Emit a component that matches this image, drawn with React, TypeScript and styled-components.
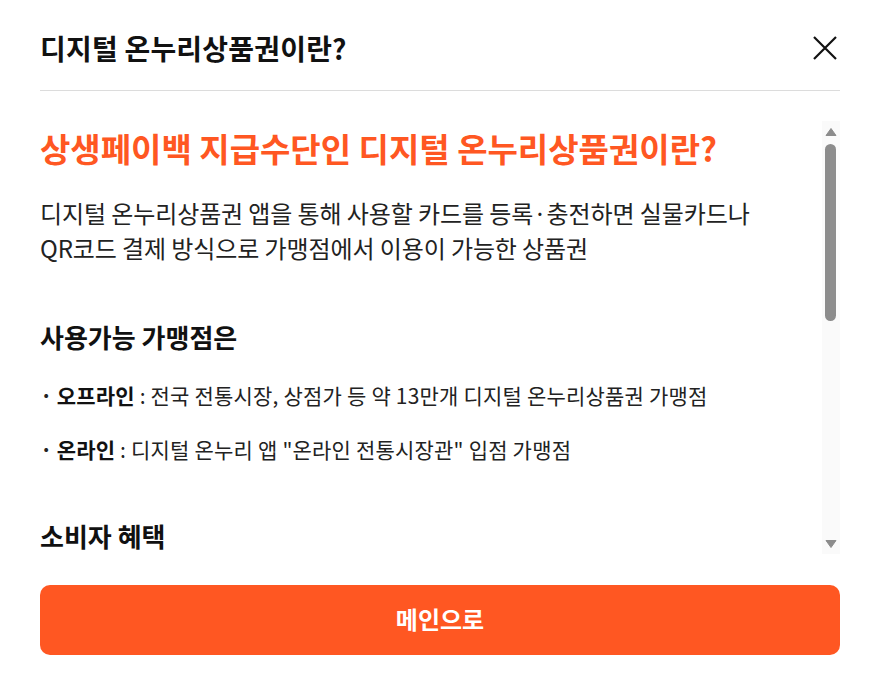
import React from 'react';
import styled, { createGlobalStyle } from 'styled-components';

const GlobalStyle = createGlobalStyle`
	html, body {
		margin: 0;
		padding: 0;
		background: #ffffff;
	}
	body {
		font-family: 'Noto Sans CJK KR', 'Noto Sans', sans-serif;
		color: #111111;
	}
`;

const Modal = styled.div`
	display: flex;
	flex-direction: column;
	width: 885px;
	height: 683px;
	box-sizing: border-box;
	padding: 30px 45px 28px 40px;
`;

const Header = styled.div`
	display: flex;
	align-items: flex-start;
	justify-content: space-between;
	padding-bottom: 24px;
	border-bottom: 1px solid #dcdcdc;
`;

const Title = styled.h1`
	margin: 0;
	font-size: 28px;
	line-height: 36px;
	font-weight: 700;
	letter-spacing: 0.2px;
`;

const CloseButton = styled.button`
	display: flex;
	align-items: center;
	justify-content: center;
	width: 36px;
	height: 36px;
	margin-right: -3px;
	padding: 0;
	border: none;
	background: transparent;
	cursor: pointer;
`;

const ScrollRow = styled.div`
	display: flex;
	margin-top: 30px;
	height: 433px;
`;

const ScrollBody = styled.div`
	flex: 1;
	overflow-y: auto;
	scrollbar-width: none;

	&::-webkit-scrollbar {
		display: none;
	}
`;

const ScrollTrack = styled.div`
	display: flex;
	flex-direction: column;
	align-items: flex-start;
	width: 18px;
	box-sizing: border-box;
	padding: 6px 0 5px 3px;
	background: #fafafa;
`;

const Arrow = styled.svg<{ $down?: boolean }>`
	display: block;
	transform: ${(p) => (p.$down ? 'rotate(180deg)' : 'none')};
	margin-top: ${(p) => (p.$down ? 'auto' : '0')};
`;

const Thumb = styled.div`
	width: 11px;
	height: 177px;
	margin-top: 7px;
	border-radius: 6px;
	background: #8c8c8c;
`;

const Content = styled.div`
	padding: 6px 20px 75px 0;
`;

const Lead = styled.h2`
	margin: 0 0 26px;
	font-size: 33px;
	line-height: 42px;
	font-weight: 700;
	color: #ff5722;
`;

const Paragraph = styled.p`
	margin: 0;
	font-size: 24px;
	line-height: 35px;
	letter-spacing: -0.1px;
	color: #222222;
`;

const SectionTitle = styled.h3`
	margin: 55px 0 26px;
	font-size: 26px;
	line-height: 34px;
	font-weight: 700;
`;

const Bullet = styled.p`
	margin: 0 0 24px;
	font-size: 21px;
	line-height: 30px;
	letter-spacing: 0.2px;
	color: #222222;

	strong {
		font-weight: 700;
		color: #111111;
	}
`;

const Dot = styled.span`
	margin-right: 4px;
	font-weight: 700;
`;

const Footer = styled.div`
	margin-top: 31px;
`;

const MainButton = styled.button`
	width: 800px;
	height: 70px;
	padding: 0 0 4px;
	border: none;
	border-radius: 10px;
	background: #ff5722;
	color: #ffffff;
	font-family: inherit;
	font-size: 24px;
	font-weight: 700;
	cursor: pointer;
`;

const ArrowIcon: React.FC<{ down?: boolean }> = ({ down }) => (
	<Arrow $down={down} width='12' height='10' viewBox='0 0 12 10'>
		<path d='M6 1.5L11 8.5H1Z' fill='#8c8c8c' stroke='#8c8c8c' strokeLinejoin='round' />
	</Arrow>
);

const App: React.FC = () => {
	return (
		<>
			<GlobalStyle />
			<Modal>
				<Header>
					<Title>디지털 온누리상품권이란?</Title>
					<CloseButton aria-label='닫기'>
						<svg width='26' height='26' viewBox='0 0 26 26'>
							<path d='M2 2L24 24M24 2L2 24' stroke='#111' strokeWidth='2.2' />
						</svg>
					</CloseButton>
				</Header>
				<ScrollRow>
					<ScrollBody>
						<Content>
							<Lead>상생페이백 지급수단인 디지털 온누리상품권이란?</Lead>
							<Paragraph>
								디지털 온누리상품권 앱을 통해 사용할 카드를 등록·충전하면 실물카드나
								<br />
								QR코드 결제 방식으로 가맹점에서 이용이 가능한 상품권
							</Paragraph>

							<SectionTitle>사용가능 가맹점은</SectionTitle>
							<Bullet>
								<Dot>·</Dot>
								<strong>오프라인</strong> : 전국 전통시장, 상점가 등 약 13만개 디지털 온누리상품권 가맹점
							</Bullet>
							<Bullet>
								<Dot>·</Dot>
								<strong>온라인</strong> : 디지털 온누리 앱 "온라인 전통시장관" 입점 가맹점
							</Bullet>

							<SectionTitle>소비자 혜택</SectionTitle>
							<Bullet>
								<Dot>·</Dot>
								<strong>할인 구매</strong> : 디지털 온누리상품권 충전 시 상시 할인 혜택 제공
							</Bullet>
							<Bullet>
								<Dot>·</Dot>
								<strong>소득공제</strong> : 전통시장 사용분 연말정산 소득공제율 40% 적용
							</Bullet>
							<Bullet>
								<Dot>·</Dot>
								<strong>간편 결제</strong> : 카드 태그 또는 QR코드 스캔으로 빠르게 결제
							</Bullet>

							<SectionTitle>유의사항</SectionTitle>
							<Bullet>
								<Dot>·</Dot>상생페이백으로 지급된 상품권은 현금으로 환불되지 않습니다.
							</Bullet>
							<Bullet>
								<Dot>·</Dot>사용처 및 한도는 디지털 온누리 앱에서 확인할 수 있습니다.
							</Bullet>
						</Content>
					</ScrollBody>
					<ScrollTrack aria-hidden='true'>
						<ArrowIcon />
						<Thumb />
						<ArrowIcon down />
					</ScrollTrack>
				</ScrollRow>
				<Footer>
					<MainButton>메인으로</MainButton>
				</Footer>
			</Modal>
		</>
	);
};

export default App;
